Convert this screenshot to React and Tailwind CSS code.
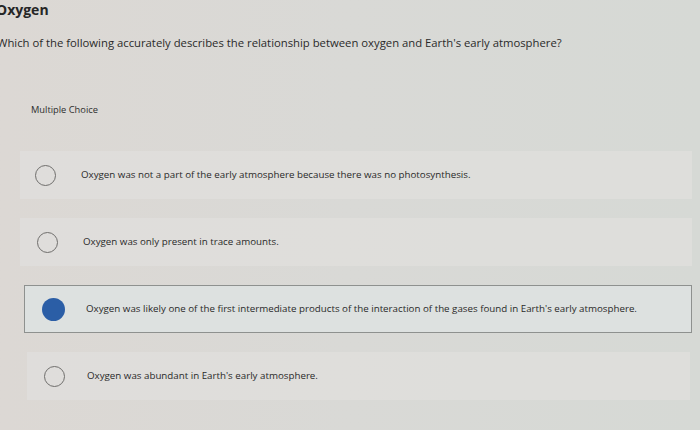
import React from 'react';

const options = [
  { text: 'Oxygen was not a part of the early atmosphere because there was no photosynthesis.', pad: 'pl-[15px]', gap: 'gap-[25px]' },
  { text: 'Oxygen was only present in trace amounts.', pad: 'pl-[17px]', gap: 'gap-[25px]' },
  { text: "Oxygen was likely one of the first intermediate products of the interaction of the gases found in Earth's early atmosphere.", pad: 'pl-[17px]', gap: 'gap-[21px]', selected: true },
  { text: "Oxygen was abundant in Earth's early atmosphere.", pad: 'pl-[17px]', gap: 'gap-[22px]' },
];

function Radio({ selected }) {
  if (selected) {
    return <span className="block w-[23px] h-[23px] rounded-full bg-[#2b5ea6] shrink-0" />;
  }
  return <span className="block w-[21px] h-[21px] rounded-full border-[1.5px] border-[#6f6e6c] shrink-0" />;
}

export default function App() {
  return (
    <div
      className="w-[700px] h-[430px] overflow-hidden bg-linear-to-r from-[#dcd8d4] via-[#d9d9d6] to-[#d6d9d5] text-[#2b2b2b]"
      style={{ fontFamily: '"Open Sans", Lato, sans-serif' }}
    >
      <div className="ml-[-4px] pt-[1px] text-[14px] font-bold leading-[18px] text-[#262626]">Oxygen</div>
      <div className="ml-[-3px] mt-[16px] text-[11.3px] leading-[16px] text-[#2a2a2a]">
        Which of the following accurately describes the relationship between oxygen and Earth's early atmosphere?
      </div>
      <div className="ml-[31px] mt-[52px] text-[9.3px] leading-[14px] text-[#2e2e2e]">Multiple Choice</div>

      <div className="mt-[34px] flex flex-col gap-[19px]">
        {options.map((o, i) => (
          <div
            key={i}
            className={
              'h-[48px] flex items-center ' +
              o.pad +
              ' ' +
              o.gap +
              ' ' +
              (o.selected
                ? 'ml-[24px] mr-[8px] border border-[#8e918f] bg-[#dde1e0]'
                : (i === 3 ? 'ml-[27px] mr-[10px]' : 'ml-[20px] mr-[8px]') + ' bg-[#e0dfdc]/80')
            }
          >
            <Radio selected={o.selected} />
            <span className="text-[9.75px] text-[#2a2a2a] whitespace-nowrap">{o.text}</span>
          </div>
        ))}
      </div>
    </div>
  );
}
